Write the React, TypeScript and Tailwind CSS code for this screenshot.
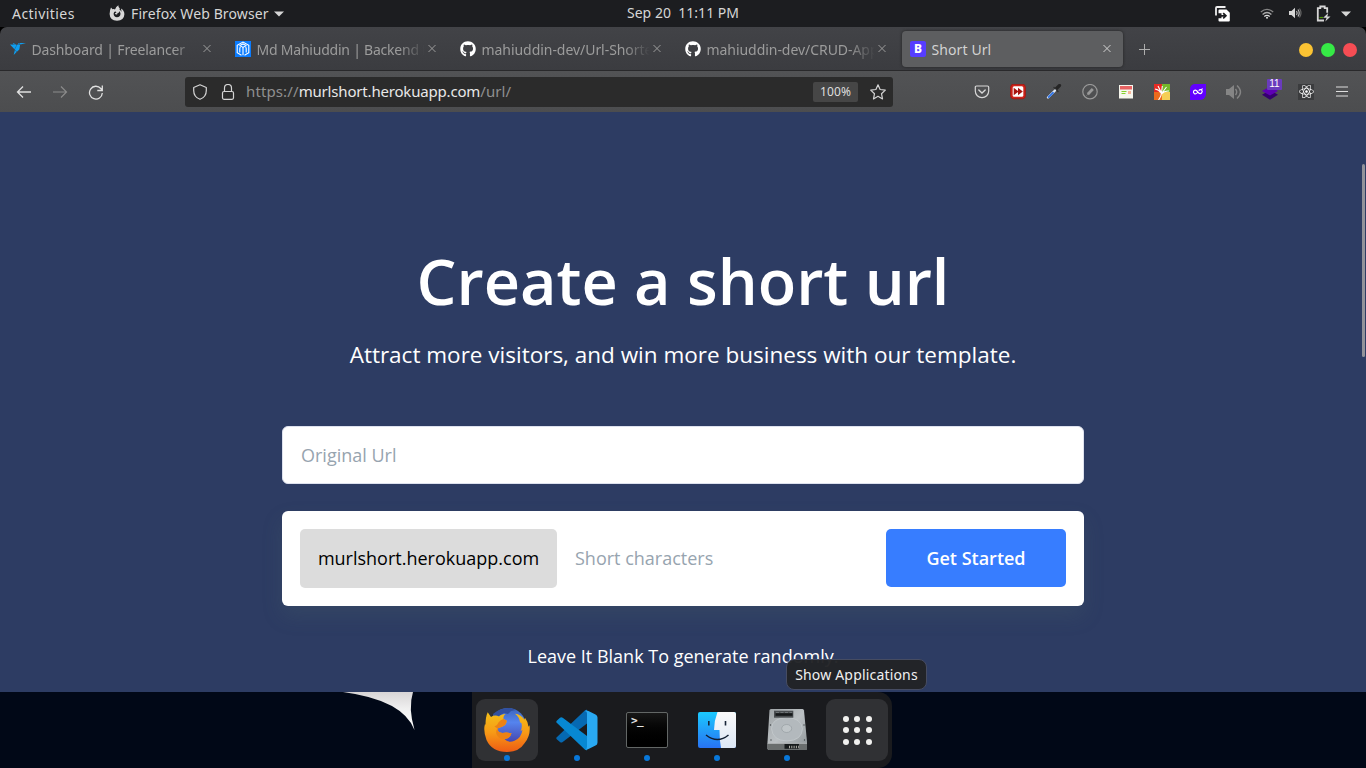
import type { ReactNode } from "react";
import { SiFreelancer } from "react-icons/si";
import { FaGithub, FaReact } from "react-icons/fa";

function Close() {
  return (
    <svg className="h-4 w-4 shrink-0" viewBox="0 0 16 16" stroke="currentColor" strokeWidth="1" fill="none">
      <path d="M4.500 4l7 7M11.500 4l-7 7" />
    </svg>
  );
}

function FirefoxSymbol() {
  return (
    <svg className="h-4 w-4" viewBox="0 0 16 16">
      <path
        fill="#d8d8d8"
        d="M2 2.500l1.500 1.800Q5 3.600 6 4.600 6.300 2 9.400.2q-.4 2 1.500 3.300l-.6.700Q12 5.500 12.300 7q.3-1.500-.4-3.400 3.500 2 3.500 5.700-.3 6.200-7.400 6.500Q.9 15.500.6 9 .7 5 2 2.500zM6.300 6.200Q4.700 7 4.600 8.700 4.800 12 8 12.200q3.300-.2 3.500-3.500Q11.400 7 10.300 6q.2 1.200-.6 1.800L8.400 8.100Q9 9.300 7.600 9.500 6 9.400 5.900 8.200l1.700-.8Q6.600 7 6.300 6.200z"
      />
    </svg>
  );
}

function TopBar() {
  return (
    <div className="flex h-[27px] shrink-0 bg-[#1c1d20] text-[#d6d6d6]">
      <div className="flex w-[627px] items-center pl-3">
        <span className="w-[97px] text-[14px] tracking-[0.45px]">Activities</span>
        <div className="pb-0.5"><FirefoxSymbol /></div>
        <span className="ml-1.5 w-[139px] text-[14px] tracking-[0.12px] whitespace-nowrap">Firefox Web Browser</span>
        <svg className="ml-1 h-[6px] w-[10px]" viewBox="0 0 10 6">
          <path d="M0 .5h10L5 5.500z" fill="#d6d6d6" />
        </svg>
      </div>
      <div className="flex w-[587px] items-center pb-[2px] text-[14px] tracking-[0.02px] whitespace-pre">Sep 20  11:11 PM</div>
      <div className="flex items-center">
        <svg className="h-4 w-4" viewBox="0 0 16 16">
          <path d="M2 9.500V2Q2 1 3 1h8.500" stroke="#eee" strokeWidth="1.800" fill="none" />
          <path d="M5.500 3.500h7l3.300 3.300v7.700a1 1 0 01-1 1H5.500a1 1 0 01-1-1v-2.200h3v-5h-3V4.500a1 1 0 011-1z" fill="#fff" />
          <path d="M4.500 9.800h7M9.200 7.200l2.700 2.600-2.700 2.600" stroke="#1c1d20" strokeWidth="1.700" fill="none" />
        </svg>
        <svg className="ml-[29px] h-4 w-4" viewBox="0 0 16 16" fill="none" stroke="#aaa" strokeWidth="1.300">
          <path d="M1.800 6Q8 .7 14.200 6" stroke="#858585" />
          <path d="M3.600 8.400q4.400-3.800 8.800 0" />
          <path d="M5.300 10.500q2.700-2.300 5.400 0" stroke="#ddd" />
          <circle cx="8" cy="11.800" r="1" fill="#ddd" stroke="none" />
        </svg>
        <svg className="ml-3 h-4 w-4" viewBox="0 0 16 16" fill="none" stroke="#bbb" strokeWidth="1.200">
          <path d="M2 5h2.500L8 1.800v10.400L4.500 9H2z" fill="#d6d6d6" stroke="none" />
          <path d="M9.500 5q1.400 2 0 4M11 3.500q2.400 3.500 0 7" />
          <path d="M12.500 2.500q3 4.500 0 9" stroke="#666" />
        </svg>
        <svg className="ml-3 h-[17px] w-4" viewBox="0 0 16 17">
          <path d="M9 15.500H2.800V3.200h2.500V1.500h4.400v1.700h2.500v4.500" fill="none" stroke="#d6d6d6" strokeWidth="1.800" />
          <path d="M4.500 12.500H8" stroke="#4e9a06" strokeWidth="1.200" />
          <path d="M13.200 8l-5 4.800h3.400l-1.300 3.700 5.200-4.900h-3.200z" fill="#d6d6d6" />
        </svg>
        <svg className="ml-[10px] h-[6px] w-[10px]" viewBox="0 0 10 6">
          <path d="M0 .5h10L5 5.500z" fill="#d6d6d6" />
        </svg>
      </div>
    </div>
  );
}

function Tab({ icon, label, labelClass, active }: { icon: ReactNode; label: string; labelClass: string; active?: boolean }) {
  return (
    <div className="h-[43px] w-[225px] shrink-0 px-0.5 pt-1 pb-[3px]">
      <div
        className={
          active
            ? "flex h-full items-center rounded-[4px] bg-[#5d5e60] pl-2 text-[#d2d2d2] shadow-[0_0_3px_#222]"
            : "flex h-full items-center pl-2 text-[#9c9c9c]"
        }
      >
        <div className="flex h-4 w-4 shrink-0 items-center justify-center">{icon}</div>
        <div className="ml-[5.5px] w-[167.5px] overflow-hidden">
          <div
            className={
              active
                ? "text-[14px] whitespace-nowrap " + labelClass
                : "text-[14px] whitespace-nowrap [mask-image:linear-gradient(to_right,#000_142px,transparent_168px)] " + labelClass
            }
          >
            {label}
          </div>
        </div>
        <Close />
      </div>
    </div>
  );
}

function TabBar() {
  return (
    <div className="bg-black">
      <div className="flex h-[44px] shrink-0 items-start rounded-t-[7px] border-b border-[#29292b] bg-linear-to-b from-[#424347] to-[#3b3c40]">
        <Tab icon={<SiFreelancer className="h-4 w-4 text-[#0e9ef0]" />} label="Dashboard | Freelancer" labelClass="tracking-[-0.14px]" />
        <Tab
          icon={
            <svg className="h-4 w-4" viewBox="0 0 16 16">
              <rect width="16" height="16" fill="#0a7cff" />
              <g fill="none" stroke="#fff" strokeWidth="1.100">
                <path d="M6.500 14.200l-4.300-2.600V4.300L8 1.100l5.800 3.200v7.300l-4.300 2.600" />
                <path d="M4.800 11.500V7.500Q4.800 5.500 6.400 5.500 8 5.500 8 7.500v6.800M8 7.500q0-2 1.600-2 1.600 0 1.600 2v4M4.500 4.700L8 2.900l3.500 1.800" />
              </g>
            </svg>
          }
          label="Md Mahiuddin | Backend D"
          labelClass="tracking-[-0.22px]"
        />
        <Tab icon={<FaGithub className="h-4 w-4 text-white" />} label="mahiuddin-dev/Url-Shortener" labelClass="tracking-[-0.05px]" />
        <Tab icon={<FaGithub className="h-4 w-4 text-white" />} label="mahiuddin-dev/CRUD-Application" labelClass="tracking-[-0.05px]" />
        <Tab
          active
          icon={<div className="flex h-4 w-4 items-center justify-center rounded-[2px] bg-[#563dff] text-[12px] leading-none font-extrabold text-white">B</div>}
          label="Short Url"
          labelClass="tracking-[0.1px]"
        />
        <svg className="mt-[15px] ml-3 h-[14px] w-[14px]" viewBox="0 0 14 14" stroke="#aeaeae" strokeWidth="1">
          <path d="M7.500 2v11M2 7.500h11" />
        </svg>
        <div className="mt-4 ml-[148px] flex gap-2">
          <div className="h-[14px] w-[14px] rounded-full bg-[#fbc333]" />
          <div className="h-[14px] w-[14px] rounded-full bg-[#36e946]" />
          <div className="h-[14px] w-[14px] rounded-full bg-[#f64d54]" />
        </div>
      </div>
    </div>
  );
}

function Extensions() {
  return (
    <div className="flex items-center gap-5">
      <svg className="h-4 w-4" viewBox="0 0 16 16" fill="none" stroke="#d8d8d8" strokeWidth="1.200">
        <path d="M2.500 2h11q1.200 0 1.200 1.200V7a6.700 6.700 0 01-13.400 0V3.200Q1.300 2 2.500 2z" />
        <path d="M4.800 6L8 9l3.200-3" strokeWidth="1.400" strokeLinecap="round" />
      </svg>
      <svg className="h-4 w-4" viewBox="0 0 16 16">
        <rect x=".7" y=".2" width="14.600" height="14.600" rx="3" fill="#cf251c" stroke="#a51812" />
        <rect x="2.700" y="2.200" width="10.600" height="10.600" rx="1.500" fill="#fff" />
        <path d="M3.700 3.700L8 7V3.700l4.800 3.800L8 11.300V8l-4.300 3.300z" fill="#a71410" />
      </svg>
      <svg className="h-4 w-4" viewBox="0 0 16 16" fill="none" strokeLinecap="round">
        <path d="M10.500 4.500L13.500 1.500" stroke="#252525" strokeWidth="3.200" />
        <path d="M8 3.500l4 4" stroke="#303030" strokeWidth="1.500" />
        <path d="M2 13.500L9 6.500" stroke="#dfe8f5" strokeWidth="2.400" />
        <path d="M2.700 13l4.300-4.200" stroke="#3577e5" strokeWidth="1.900" />
      </svg>
      <svg className="h-4 w-4" viewBox="0 0 16 16" fill="none" stroke="#999">
        <circle cx="8" cy="7.700" r="7.200" strokeWidth="1.200" />
        <path d="M5.800 10.200l5-5.200" strokeWidth="2.800" />
        <path d="M4.700 11.400l1-1" />
      </svg>
      <svg className="h-4 w-4" viewBox="0 0 16 16">
        <rect x="1" y="1" width="14" height="13.500" fill="#f7f7ee" />
        <rect x="2" y="2" width="12" height="3.500" fill="#e86363" />
        <path d="M3.500 7.500h5M3.500 9.500h4" stroke="#86d12d" />
        <rect x="10" y="7" width="3" height="3" fill="#f8b49a" />
      </svg>
      <svg className="h-4 w-4" viewBox="0 0 16 16">
        <path fill="#e72b24" d="M0 0h8v8H0z" />
        <path fill="#75b82a" d="M8 0h8v8H8z" />
        <path fill="#ed6b1e" d="M0 8h8v8H0z" />
        <path fill="#f5cf55" d="M8 8h8v8H8z" />
        <path d="M4.500 16Q8 12 7.500 7M7 9Q5 5.500 1 5M7 8L4 2M7.500 9l.8-7M8 9l4.500-6M7.500 10q3-3.500 7.500-3" stroke="#fff" fill="none" strokeWidth="1.100" />
      </svg>
      <svg className="h-4 w-4" viewBox="0 0 16 16">
        <path fill="#6200ff" d="M5 0h11v10a6 6 0 01-6 6H0V5a5 5 0 015-5z" />
        <path d="M7.500 8.500q-1.500 2-3 1.300-1.500-1-.9-2.600Q5 5.300 6.700 6.800l2 2.200q1.500 1.200 2.900 0 1.200-1.500.1-2.900-1.500-1.200-3 .6M11.200 6.200L12.500 4.500" fill="none" stroke="#fff" strokeWidth="1.200" />
      </svg>
      <svg className="h-4 w-4" viewBox="0 0 16 16" fill="none" stroke="#858585" strokeWidth="1.400">
        <path d="M0 5h3l5-4v14l-5-4H0z" fill="#858585" stroke="none" />
        <path d="M9.500 5q2.400 3 0 6M11 1.500q7 6.500 0 13" />
      </svg>
      <div className="relative h-4 w-4">
        <svg className="h-4 w-4" viewBox="0 0 16 16">
          <path d="M8 6l8 4.800L8 15.700 0 10.800z" fill="#35006f" />
          <path d="M8 2.500l8 4.400-8 4.700-8-4.700z" fill="#5e00b4" />
        </svg>
        <div className="absolute top-[-5px] left-[5px] flex h-[11px] w-[15px] items-center justify-center rounded-[1px] bg-[#6a3bbd] text-[10px] leading-none text-white [font-family:'Liberation_Sans',sans-serif]">
          11
        </div>
      </div>
      <div className="flex h-4 w-4 items-center justify-center bg-[#3b3c3e]">
        <FaReact className="h-[15px] w-[15px] text-white" />
      </div>
      <svg className="h-4 w-4" viewBox="0 0 16 16" stroke="#dedede" strokeWidth="1.200">
        <path d="M2 3h12M2 7.500h12M2 12h12" />
      </svg>
    </div>
  );
}

function Toolbar() {
  return (
    <div className="flex h-[41px] shrink-0 items-center bg-linear-to-b from-[#525355] to-[#4c4d4f] pl-4">
      <svg className="h-4 w-4" viewBox="0 0 16 16" fill="none" stroke="#e0e0e0" strokeWidth="1.300">
        <path d="M15 8H1.500M7 2.500L1.500 8 7 13.500" />
      </svg>
      <svg className="ml-5 h-4 w-4" viewBox="0 0 16 16" fill="none" stroke="#8b8b8b" strokeWidth="1.200">
        <path d="M1 8h13.500M9 2.500L14.500 8 9 13.500" />
      </svg>
      <svg className="ml-5 h-4 w-4" viewBox="0 0 16 16" fill="none" stroke="#e0e0e0" strokeWidth="1.300">
        <path d="M14.300 9A6.400 6.400 0 1112.800 4.500l1.500 1.700M14.300 1.500v5h-5" />
      </svg>
      <div className="ml-[81px] flex h-[30px] w-[708px] items-center rounded-[3px] bg-[#2b2b2b] pl-[7px]">
        <svg className="h-4 w-4" viewBox="0 0 16 16" fill="none" stroke="#d5d5d5" strokeWidth="1.200" strokeLinejoin="round">
          <path d="M8 .8l6.300 2.700v3C14.300 10.500 11.500 14 8 15.300 4.500 14 1.700 10.500 1.700 6.500v-3z" />
        </svg>
        <svg className="ml-3 h-4 w-4" viewBox="0 0 16 16" fill="none" stroke="#d5d5d5" strokeWidth="1.200">
          <rect x="2.500" y="7.500" width="11" height="7.800" rx="1.500" />
          <path d="M4.500 7.500V4a3.500 3.500 0 017 0v3.500" />
        </svg>
        <div className="ml-[10px] w-[567px] text-[15px] tracking-[0.12px] text-[#8f8f8f]">
          https://<span className="tracking-[-0.18px] text-[#e8e8e8]">murlshort.herokuapp.com</span>/url/
        </div>
        <div className="flex h-5 w-[45px] items-center justify-center rounded-[2px] bg-[#464646] text-[12px] tracking-[0.1px] text-[#dedede]">100%</div>
        <svg className="ml-3 h-4 w-4" viewBox="0 0 16 16" fill="none" stroke="#d5d5d5" strokeWidth="1.200" strokeLinejoin="round">
          <path d="M8 .8l2.100 4.700 5.200.6-3.800 3.600 1 5.200L8 12.300 3.500 14.900l1-5.200L.7 6.100l5.200-.6z" />
        </svg>
      </div>
      <div className="ml-[81px]">
        <Extensions />
      </div>
    </div>
  );
}

function Page() {
  return (
    <div className="relative flex h-[580px] shrink-0 flex-col items-center overflow-hidden bg-[#2d3c63] text-white [font-family:'Open_Sans',sans-serif]">
      <h1 className="mt-[129px] h-[80px] text-[63px] leading-[80px] font-semibold whitespace-nowrap">Create a short url</h1>
      <p className="mt-[18px] h-8 text-[22.5px] leading-8 whitespace-nowrap">Attract more visitors, and win more business with our template.</p>
      <div className="mt-[55px] flex h-[58px] w-[802px] items-center rounded-[6px] border border-[#dde1ee] bg-white pl-[18px] text-[18px] text-[#97a4af]">
        Original Url
      </div>
      <div className="mt-[27px] flex h-[95px] w-[802px] items-start rounded-[6px] bg-white p-[18px] text-[18px] shadow-[0_10px_20px_rgba(76,103,103,0.22)]">
        <div className="flex h-[59px] w-[257px] items-center justify-center rounded-[5px] bg-[#dcdcdc] text-black">murlshort.herokuapp.com</div>
        <div className="flex h-[59px] w-[329px] items-center pl-[18px] text-[#97a4af]">Short characters</div>
        <button className="flex h-[58px] w-[180px] items-center justify-center rounded-[5px] bg-[#377dff] font-semibold">Get Started</button>
      </div>
      <div className="mt-9 text-[18px] leading-[29px]">Leave It Blank To generate randomly.</div>
      <div className="absolute top-[52px] right-[1px] h-[193px] w-[3px] rounded-full bg-[#92939a]" />
    </div>
  );
}

function DockItem({ children, highlighted, running }: { children: ReactNode; highlighted?: boolean; running?: boolean }) {
  return (
    <div className="relative flex w-[70px] justify-center">
      <div
        className={
          highlighted
            ? "flex h-[62px] w-[62px] items-center justify-center rounded-[9px] bg-[#303134]"
            : "flex h-[62px] w-[62px] items-center justify-center"
        }
      >
        {children}
      </div>
      {running && <div className="absolute top-[56px] left-8 h-[6px] w-[6px] rounded-full bg-[#0878da]" />}
    </div>
  );
}

function FirefoxIcon() {
  return (
    <svg className="h-12 w-12" viewBox="0 0 48 48">
      <defs>
        <linearGradient id="fox" x1="0" y1="0" x2="0" y2="1">
          <stop offset="0" stopColor="#f3bf18" />
          <stop offset=".5" stopColor="#f79b16" />
          <stop offset="1" stopColor="#ee5b14" />
        </linearGradient>
        <linearGradient id="globe" x1="0" y1="0" x2="0" y2="1">
          <stop offset="0" stopColor="#3a64bb" />
          <stop offset=".4" stopColor="#5584ee" />
          <stop offset="1" stopColor="#4440a8" />
        </linearGradient>
      </defs>
      <circle cx="25" cy="20" r="18" fill="url(#globe)" />
      <path d="M10 8Q17 1.500 27 2l6 2-5 1-3 3-4-1-5 3-5 2z" fill="#31509f" />
      <path
        fill="url(#fox)"
        d="M4.700 6.300L8 11q4-2.500 8-.5Q18 8 22.500 8 20 10 20.500 13l3 1.500q.5 4-4 6l-5 2q0 4 5 4.500 4-1 9 .3-1 5-7 6 4 4 10 1.500 7-3 8-11l-2 1.500q2-4 1-8l-1.500-1q-.500-5-5-8.500 5.500.5 9.500 6l.5-2q3 4 3.500 9l1-1.500q1.500 10-5 18Q36 46 24 46 9 46 3.500 34 0 25 2 18l.5 1Q2.500 11 4.700 6.300z"
      />
      <path d="M20.500 13l3 1.500q.5 4-4 6l-5 2-3-2q3-1 4-4 2-3 5-3.500zM14.500 22.500q0 4 5 4.500 4-1 9 .3-1 5-7 6-6 0-8-5-1-4 1-5.800z" fill="#ec8214" />
    </svg>
  );
}

function CodeIcon() {
  return (
    <svg className="h-[42px] w-[42px]" viewBox="0 0 42 42">
      <path d="M1 28q-1.500 1.200 0 2.400l3 2.700q1.300 1 2.700 0L31 14.500V.8q-1.400-.2-2.500 1z" fill="#0669b2" />
      <path d="M1 14q-1.500-1.300 0-2.600l3-2.700q1.300-1 2.700 0L31 27v14.200q-1.400.2-2.500-1z" fill="#0788d2" />
      <path d="M29 40.500q2 .3 3.500-.5l7-3.400q2-1 2-3.200V8.600q0-2.200-2-3.200L32.500 2q-2-1-4 .3 2.500-.6 2.500 2.200v33q0 2.700-2 3z" fill="#29a9f2" />
    </svg>
  );
}

function TerminalIcon() {
  return (
    <div className="h-[36px] w-[42px] rounded-[2px] border border-[#636766] bg-linear-to-b from-[#171717] to-black pt-[2px] pl-1 text-[11px] leading-[12px] font-bold tracking-[-0.5px] text-[#e4e4e4] [font-family:'DejaVu_Sans_Mono',monospace]">
      &gt;_
    </div>
  );
}

function FinderIcon() {
  return (
    <svg className="h-9 w-[38px]" viewBox="0 0 38 36">
      <defs>
        <linearGradient id="face-l" x1="0" y1="0" x2="0" y2="1">
          <stop offset="0" stopColor="#1bcaff" />
          <stop offset="1" stopColor="#2873f3" />
        </linearGradient>
        <linearGradient id="face-r" x1="0" y1="0" x2="0" y2="1">
          <stop offset="0" stopColor="#fafafa" />
          <stop offset="1" stopColor="#dce7f5" />
        </linearGradient>
      </defs>
      <rect width="38" height="36" rx="2" fill="url(#face-l)" />
      <path d="M19.500 0H36q2 0 2 2v32q0 2-2 2H23q-1.500-8-1.500-18H16Q16 9 19.500 0z" fill="url(#face-r)" />
      <path d="M10.800 9v4.500M27.500 9v4.500" stroke="#172638" strokeWidth="1.600" />
      <path d="M8 23q11.500 9 22.500 0" stroke="#101d30" strokeWidth="1.500" fill="none" />
    </svg>
  );
}

function DriveIcon() {
  return (
    <svg className="h-[42px] w-[42px]" viewBox="0 0 42 42">
      <defs>
        <linearGradient id="metal" x1="0" y1="0" x2="1" y2="1">
          <stop offset="0" stopColor="#9ea3a6" />
          <stop offset=".5" stopColor="#bcc1c4" />
          <stop offset="1" stopColor="#8d9497" />
        </linearGradient>
      </defs>
      <path d="M5 0h31.500q1.300 0 1.500 1.500L41 32.500v7q0 1.500-1.500 1.500h-36Q1.500 41 1.500 39.500v-7l2-31Q3.600 0 5 0z" fill="url(#metal)" />
      <path d="M1.500 34.500H41v5q0 1.500-1.500 1.500h-36Q1.500 41 1.500 39.500z" fill="#6a6e6e" />
      <path d="M1.500 34.300H41" stroke="#c9cdce" strokeWidth=".6" />
      <path d="M5.500 19.500Q6 9 21 8.500 35 9 36.500 19.500 36 31.500 21 32 6.500 31.500 5.500 19.500z" fill="#b3b9bd" stroke="#c6cbce" strokeWidth=".7" />
      <ellipse cx="20.700" cy="19.500" rx="5" ry="4" fill="#bfc5c8" stroke="#979ea2" strokeWidth=".7" />
      <path d="M8 1.700h19.300v7H8z" fill="#4a4e51" />
      <path d="M10 3.500h16" stroke="#6d7275" strokeWidth="1" strokeDasharray="3 1.500" />
      <path d="M9.500 5.500h17" stroke="#15181a" strokeWidth="2.600" />
      <path d="M18.500 35H33v4.800H18.500z" fill="#171b1c" />
      <path d="M23 38h10" stroke="#b0b0a8" strokeWidth="2.500" strokeDasharray="1 1.300" />
      <g fill="#3e4446">
        <circle cx="4.500" cy="16" r=".7" />
        <circle cx="38" cy="16" r=".7" />
        <circle cx="5" cy="31" r=".7" />
        <circle cx="38.500" cy="31" r=".7" />
      </g>
    </svg>
  );
}

function Dock() {
  return (
    <div className="flex h-[76px] shrink-0 bg-[#010817]">
      <div className="w-[472px]">
        <svg className="ml-[342px] h-[39px] w-[74px]" viewBox="0 0 74 39">
          <defs>
            <linearGradient id="wing" x1="0" y1="0" x2="0" y2="1">
              <stop offset="0" stopColor="#d8d5d6" />
              <stop offset=".45" stopColor="#f0f0f0" />
              <stop offset="1" stopColor="#fff" />
            </linearGradient>
          </defs>
          <path d="M1 0h70q-5 16 1.500 38Q61 8 1 0z" fill="url(#wing)" />
        </svg>
      </div>
      <div className="flex h-[76px] w-[420px] items-start rounded-r-[14px] bg-[#1a1b1e] pt-[7px]">
        <DockItem highlighted running><FirefoxIcon /></DockItem>
        <DockItem running><CodeIcon /></DockItem>
        <DockItem running><TerminalIcon /></DockItem>
        <DockItem running><FinderIcon /></DockItem>
        <DockItem running><DriveIcon /></DockItem>
        <DockItem highlighted>
          <div className="grid grid-cols-3 gap-[5.5px]">
            {Array.from({ length: 9 }, (_, i) => (
              <div key={i} className="h-[6px] w-[6px] rounded-full bg-[#f1f1ef]" />
            ))}
          </div>
        </DockItem>
      </div>
    </div>
  );
}

export default function App() {
  return (
    <div className="relative flex h-[768px] w-[1366px] flex-col overflow-hidden [font-family:'Noto_Sans',sans-serif]">
      <TopBar />
      <TabBar />
      <Toolbar />
      <Page />
      <Dock />
      <div className="absolute top-[659px] left-[786px] flex h-[31px] w-[141px] items-center justify-center rounded-[8px] border border-[#464c62] bg-[#222326]/97 text-[14px] tracking-[0.18px] text-[#f0f0f0]">
        Show Applications
      </div>
    </div>
  );
}
